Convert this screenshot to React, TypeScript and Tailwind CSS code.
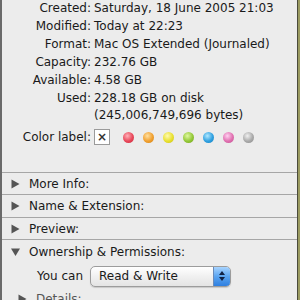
import React from "react";

const info: [string, string][] = [
  ["Created:", "Saturday, 18 June 2005 21:03"],
  ["Modified:", "Today at 22:23"],
  ["Format:", "Mac OS Extended (Journaled)"],
  ["Capacity:", "232.76 GB"],
  ["Available:", "4.58 GB"],
  ["Used:", "228.18 GB on disk"],
];

const dots = [
  "bg-[radial-gradient(circle_at_40%_35%,#ffb0b8_0%,#e8485a_55%,#c8283a_100%)]",
  "bg-[radial-gradient(circle_at_40%_35%,#ffe0a0_0%,#f0a030_55%,#d08010_100%)]",
  "bg-[radial-gradient(circle_at_40%_35%,#fffab0_0%,#e8e030_55%,#c8c010_100%)]",
  "bg-[radial-gradient(circle_at_40%_35%,#e0f8a0_0%,#94c838_55%,#70a018_100%)]",
  "bg-[radial-gradient(circle_at_40%_35%,#b0e8ff_0%,#30a0e0_55%,#1080c0_100%)]",
  "bg-[radial-gradient(circle_at_40%_35%,#ffd0f0_0%,#e070b0_55%,#c05090_100%)]",
  "bg-[radial-gradient(circle_at_40%_35%,#f0f0f0_0%,#aaaaaa_55%,#888888_100%)]",
];

function Tri({ open }: { open?: boolean }) {
  return (
    <svg width="9" height="10" viewBox="0 0 9 10" className="shrink-0">
      {open ? (
        <path d="M0 1.5 L9 1.5 L4.5 9 Z" fill="#555555" />
      ) : (
        <path d="M0.5 0.5 L8.5 5 L0.5 9.5 Z" fill="#555555" />
      )}
    </svg>
  );
}

function Section({ label, h }: { label: string; h: string }) {
  return (
    <div className={`${h} shrink-0 flex items-center gap-[9px] pl-[9px] border-b border-[#a6a6a6]`}>
      <Tri />
      <span>{label}</span>
    </div>
  );
}

export default function App() {
  return (
    <div
      className="w-[300px] h-[300px] overflow-hidden flex bg-[#8a8a55] text-[12px] text-[#1a1a1a]"
      style={{ fontFamily: '"DejaVu Sans", sans-serif' }}
    >
      <div className="w-[2px] bg-[#6a6a6a]" />
      <div className="w-[295px] bg-[#ececec] flex flex-col [&>*]:shrink-0">
        {/* General info */}
        <div className="-mt-[1px]">
          {info.map(([k, v]) => (
            <div key={k} className="flex h-[18px] items-center">
              <span className="w-[89px] text-right shrink-0">{k}</span>
              <span className="whitespace-nowrap pl-[3px]">{v}</span>
            </div>
          ))}
          <div className="flex h-[16px] items-center pl-[92px]">(245,006,749,696 bytes)</div>
        </div>

        <div className="flex items-center h-[20px] mt-[4px]">
          <span className="w-[89px] text-right shrink-0">Color label:</span>
          <div className="ml-[3px] w-[16px] h-[16px] shrink-0 bg-white border border-[#9a9a9a] flex items-center justify-center text-[12px] leading-none text-[#333] font-bold">
            ×
          </div>
          <div className="flex gap-[9px] ml-[13px]">
            {dots.map((d) => (
              <div key={d} className={`w-[11px] h-[11px] rounded-full shrink-0 ${d}`} />
            ))}
          </div>
        </div>

        <div className="mt-[25px] border-b border-[#a6a6a6]" />
        <Section label="More Info:" h="h-[22px]" />
        <Section label="Name & Extension:" h="h-[23px]" />
        <Section label="Preview:" h="h-[22px]" />
        <div className="h-[23px] flex items-center gap-[9px] pl-[9px]">
          <Tri open />
          <span>Ownership &amp; Permissions:</span>
        </div>

        <div className="flex items-center h-[26px] pl-[35px]">
          <span className="w-[53px]">You can</span>
          <div className="w-[141px] h-[21px] rounded-[5px] border border-[#9c9c9c] bg-[linear-gradient(#ffffff,#f0f0f0_50%,#e4e4e4)] flex items-center shadow-[0_1px_1px_rgba(0,0,0,0.15)]">
            <span className="pl-[8px] flex-1">Read &amp; Write</span>
            <div className="w-[17px] h-[19px] rounded-r-[4px] bg-[linear-gradient(#a8d4ff,#5aa4f0_50%,#2f7fe0)] flex flex-col items-center justify-center gap-[2px] border-l border-[#6a8ab8]">
              <svg width="6" height="4" viewBox="0 0 6 4"><path d="M0 4 L3 0 L6 4 Z" fill="#112244" /></svg>
              <svg width="6" height="4" viewBox="0 0 6 4"><path d="M0 0 L3 4 L6 0 Z" fill="#112244" /></svg>
            </div>
          </div>
        </div>

        <div className="flex items-center gap-[9px] pl-[16px] h-[20px] text-[#555]">
          <Tri />
          <span>Details:</span>
        </div>
      </div>
      <div className="w-[1px] bg-[#4a4a3a]" />
      <div className="w-[2px] bg-[#9a9a60]" />
    </div>
  );
}
